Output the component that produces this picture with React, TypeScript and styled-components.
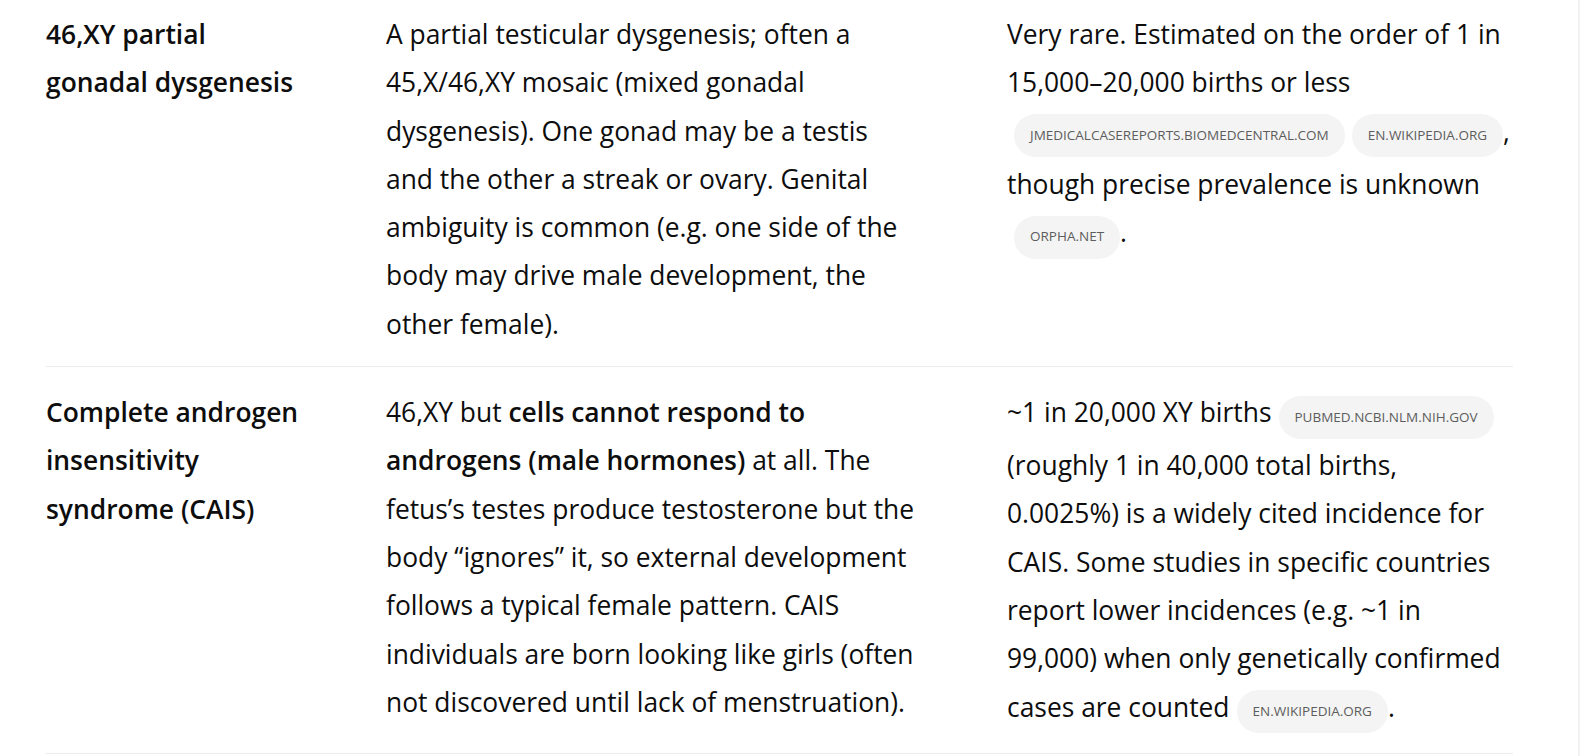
import React from "react";
import styled, { createGlobalStyle } from "styled-components";

const GlobalStyle = createGlobalStyle`
  html, body {
    margin: 0;
    padding: 0;
    background: #ffffff;
  }
  body {
    font-family: "Open Sans", "Noto Sans", "Liberation Sans", sans-serif;
    color: #0d0d0d;
    -webkit-font-smoothing: antialiased;
  }
`;

const Frame = styled.div`
  box-sizing: border-box;
  width: 100%;
  height: 756px;
  overflow: hidden;
  border-right: 2px solid #f2f2f2;
  padding-left: 46px;
`;

const Table = styled.div`
  display: flex;
  flex-direction: column;
  width: 1467px;
`;

const Row = styled.div`
  display: grid;
  grid-template-columns: 340px 621px 506px;
  padding: 21px 0 18px;
  border-bottom: 1px solid #ececec;
  font-size: 26.4px;
  line-height: 48.3px;

  &:first-child {
    padding-top: 10px;
  }
`;

const Cell = styled.div<{ $pad: number }>`
  padding-right: ${(p) => p.$pad}px;
  font-weight: 400;
`;

const HeadCell = styled(Cell)`
  font-weight: 600;
`;

const Strong = styled.strong`
  font-weight: 600;
`;

const Pill = styled.a`
  display: inline-flex;
  align-items: center;
  box-sizing: border-box;
  height: 43px;
  padding: 0 16px;
  margin: 0 0 2.2px 7px;
  border-radius: 22px;
  background: #f4f4f4;
  color: #5d5d5d;
  font-size: 13.5px;
  line-height: 1;
  font-weight: 400;
  text-decoration: none;
  white-space: nowrap;
  vertical-align: 0.5px;
`;

const rows = [
  {
    name: "46,XY partial gonadal dysgenesis",
    desc: (
      <>
        A partial testicular dysgenesis; often a 45,X/46,XY mosaic (mixed gonadal
        dysgenesis). One gonad may be a testis and the other a streak or ovary.
        Genital ambiguity is common (e.g. one side of the body may drive male
        development, the other female).
      </>
    ),
    freq: (
      <>
        Very rare. Estimated on the order of 1 in 15,000–20,000 births or less
        <Pill>JMEDICALCASEREPORTS.BIOMEDCENTRAL.COM</Pill>
        <Pill>EN.WIKIPEDIA.ORG</Pill>, though precise prevalence is unknown
        <Pill>ORPHA.NET</Pill>.
      </>
    ),
  },
  {
    name: "Complete androgen insensitivity syndrome (CAIS)",
    desc: (
      <>
        46,XY but <Strong>cells cannot respond to androgens (male hormones)</Strong>{" "}
        at all. The fetus’s testes produce testosterone but the body “ignores” it,
        so external development follows a typical female pattern. CAIS individuals
        are born looking like girls (often not discovered until lack of
        menstruation).
      </>
    ),
    freq: (
      <>
        ~1 in 20,000 XY births<Pill>PUBMED.NCBI.NLM.NIH.GOV</Pill> (roughly 1 in
        40,000 total births, 0.0025%) is a widely cited incidence for CAIS. Some
        studies in specific countries report lower incidences (e.g. ~1 in 99,000)
        when only genetically confirmed cases are counted
        <Pill>EN.WIKIPEDIA.ORG</Pill>.
      </>
    ),
  },
];

export default function App() {
  return (
    <>
      <GlobalStyle />
      <Frame>
        <Table>
          {rows.map((r) => (
            <Row key={r.name}>
              <HeadCell $pad={82}>{r.name}</HeadCell>
              <Cell $pad={91}>{r.desc}</Cell>
              <Cell $pad={0}>{r.freq}</Cell>
            </Row>
          ))}
        </Table>
      </Frame>
    </>
  );
}
